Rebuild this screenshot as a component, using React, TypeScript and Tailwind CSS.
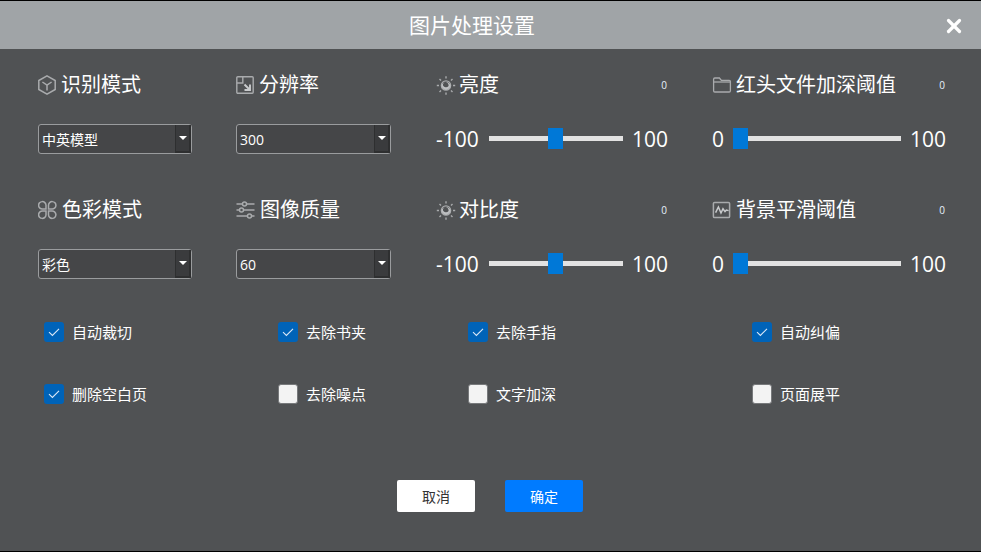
import { ReactNode } from "react";
import { X } from "lucide-react";

const iconProps = {
  viewBox: "0 0 20 20",
  fill: "none",
  stroke: "#a9abad",
  strokeWidth: 1.5,
  className: "w-5 h-5 shrink-0",
};

const CubeIcon = () => (
  <svg {...iconProps}>
    <path d="M9 0.9 17.2 5.5V14.5L9 19.1 0.8 14.5V5.5Z" />
    <path d="M4.4 7 9 10.2 13.6 7M9 10.2V15.4" />
  </svg>
);

const ResizeIcon = () => (
  <svg {...iconProps} strokeWidth={1.4}>
    <rect x="0.8" y="1.8" width="16.4" height="16.4" rx="1" />
    <path d="M0.8 8H6.8V1.8" />
    <path d="M8.5 9.5 13.5 14.5M14 9.5V15H8.5" stroke="#c9cbcd" strokeWidth={1.9} />
  </svg>
);

const CloverIcon = () => (
  <svg {...iconProps}>
    <path d="M8 9H4.7A3.7 3.7 0 1 1 8 5.3ZM10.5 9V5.3A3.7 3.7 0 1 1 13.8 9ZM8 11V14.7A3.7 3.7 0 1 1 4.7 11ZM10.5 11H13.8A3.7 3.7 0 1 1 10.5 14.7Z" />
  </svg>
);

const SlidersIcon = () => (
  <svg {...iconProps}>
    <path d="M0.5 4H6.5M10.5 4H18.5M0.5 10H3.5M7.5 10H18.5M0.5 16H11.5M15.5 16H18.5" />
    <circle cx="8.5" cy="4" r="2" />
    <circle cx="5.5" cy="10" r="2" />
    <circle cx="13.5" cy="16" r="2" />
  </svg>
);

const SunIcon = () => (
  <svg {...iconProps} strokeWidth={1.4}>
    <circle cx="10" cy="10.5" r="4.6" />
    <path d="M5.6 10.5A4.4 4.4 0 0 0 14.4 10.5 4.6 4.6 0 0 0 10 7 4 4 0 0 1 12.6 11 3.4 3.4 0 0 1 7 10.6 3 3 0 0 1 10 7 4.6 4.6 0 0 0 5.6 10.5Z" fill="#bdbfc1" stroke="none" />
    <path d="M10 1.2V3.4M10 17.6V19.8M0.8 10.5H3M17 10.5H19.2M3.5 4 5 5.5M15 15.5 16.5 17M3.5 17 5 15.5M15 5.5 16.5 4" />
  </svg>
);

const FolderIcon = () => (
  <svg {...iconProps} strokeWidth={1.3}>
    <path d="M1.6 4.2A1.2 1.2 0 0 1 2.8 3H7.4L9.4 5.4H17.2A1.2 1.2 0 0 1 18.4 6.6V15.8A1.2 1.2 0 0 1 17.2 17H2.8A1.2 1.2 0 0 1 1.6 15.8Z" />
    <path d="M1.6 7H18.4" />
  </svg>
);

const WaveIcon = () => (
  <svg {...iconProps}>
    <rect x="1.4" y="2.4" width="16.2" height="15.2" rx="1.2" />
    <path d="M3.6 12.6 6.4 7 9 13 11 8.8 13 11.6 14.4 10 16.6 10.6" stroke="#c9cbcd" />
  </svg>
);

const CheckMark = () => (
  <svg viewBox="0 0 20 20" fill="none" stroke="#dbe8f7" strokeWidth={1.1} className="w-5 h-5">
    <path d="M5 10.2 8.4 13.4 15 6.8" />
  </svg>
);

const FieldLabel = ({ icon, text, gap = "gap-[5px]", value }: { icon: ReactNode; text: string; gap?: string; value?: number }) => (
  <div className={`flex items-center h-[30px] ${gap}`}>
    {icon}
    <span className="text-[20px] leading-[30px] text-white">{text}</span>
    {value !== undefined && <span className="ml-auto pr-px text-[10px] text-[#e6f1fb]">{value}</span>}
  </div>
);

const FakeSelect = ({ value, width }: { value: string; width: string }) => (
  <div className={`flex h-[30px] mt-6 rounded-[3px] border border-[#9a9c9e] bg-[#454648] ${width}`}>
    <span className="flex-1 pl-[3px] text-[14px] leading-[29px] text-white">{value}</span>
    <span className="flex items-center justify-center w-[16px] bg-[#3a3b3d] border-l border-[#2e2f30] border-b-2 border-r-2">
      <span className="w-0 h-0 border-x-[4px] border-x-transparent border-t-[4px] border-t-white" />
    </span>
  </div>
);

const Slider = ({ min, max, value, width, minWidth }: { min: number; max: number; value: number; width: string; minWidth: string }) => {
  const ratio = (value - min) / (max - min);
  return (
    <div className={`flex items-center gap-[9px] h-[30px] mt-6 text-[21px] text-white ${width}`}>
      <span className={`leading-[30px] ${minWidth}`}>{min}</span>
      <div className="relative flex-1 h-[5px] self-start mt-3 bg-[#e2e2e2]">
        <div
          className="absolute -top-2 w-[15px] h-[21px] bg-[#0078d7]"
          style={{ left: `calc((100% - 15px) * ${ratio})` }}
        />
      </div>
      <span className="leading-[30px]">{max}</span>
    </div>
  );
};

const Option = ({ label, checked }: { label: string; checked?: boolean }) => (
  <div className="flex items-center gap-2 h-5">
    {checked ? (
      <span className="w-5 h-5 rounded-[3px] bg-[#0063b8]">
        <CheckMark />
      </span>
    ) : (
      <span className="w-5 h-5 rounded-[3px] bg-[#f3f3f3] border border-[#77797b]" />
    )}
    <span className="text-[15px] leading-5 text-white">{label}</span>
  </div>
);

export default function App() {
  return (
    <div
      className="flex flex-col w-[981px] h-[552px] overflow-hidden border-y border-black bg-[#505254]"
      style={{ fontFamily: '"Open Sans", "Noto Sans CJK SC", sans-serif' }}
    >
      <header className="relative flex items-center justify-center h-12 shrink-0 pt-px pr-[37px] bg-[#a0a4a7]">
        <h1 className="text-[21px] text-white font-normal">图片处理设置</h1>
        <X className="absolute right-[16px] top-[14px] w-[22px] h-[22px] text-white" strokeWidth={3.5} />
      </header>

      <section className="grid grid-cols-[198px_200px_276px_234px] gap-y-[41px] pl-[38px] pt-[21px]">
        <div>
          <FieldLabel icon={<CubeIcon />} text="识别模式" gap="gap-[3px]" />
          <FakeSelect value="中英模型" width="w-[154px]" />
        </div>
        <div>
          <FieldLabel icon={<ResizeIcon />} text="分辨率" gap="gap-[3px]" />
          <FakeSelect value="300" width="w-[155px]" />
        </div>
        <div className="pr-[44px]">
          <FieldLabel icon={<SunIcon />} text="亮度" gap="gap-[3px]" value={0} />
          <Slider min={-100} max={100} value={0} width="w-[232px]" minWidth="w-[44px]" />
        </div>
        <div>
          <FieldLabel icon={<FolderIcon />} text="红头文件加深阈值" gap="gap-[4px]" value={0} />
          <Slider min={0} max={100} value={0} width="w-[234px]" minWidth="w-[12px]" />
        </div>

        <div>
          <FieldLabel icon={<CloverIcon />} text="色彩模式" gap="gap-[4px]" />
          <FakeSelect value="彩色" width="w-[154px]" />
        </div>
        <div>
          <FieldLabel icon={<SlidersIcon />} text="图像质量" gap="gap-[4px]" />
          <FakeSelect value="60" width="w-[155px]" />
        </div>
        <div className="pr-[44px]">
          <FieldLabel icon={<SunIcon />} text="对比度" gap="gap-[3px]" value={0} />
          <Slider min={-100} max={100} value={0} width="w-[232px]" minWidth="w-[44px]" />
        </div>
        <div>
          <FieldLabel icon={<WaveIcon />} text="背景平滑阈值" gap="gap-[4px]" value={0} />
          <Slider min={0} max={100} value={0} width="w-[234px]" minWidth="w-[12px]" />
        </div>
      </section>

      <section className="grid grid-cols-[234px_190px_284px_1fr] gap-y-[42px] pl-[44px] mt-[43px]">
        <Option label="自动裁切" checked />
        <Option label="去除书夹" checked />
        <Option label="去除手指" checked />
        <Option label="自动纠偏" checked />
        <Option label="删除空白页" checked />
        <Option label="去除噪点" />
        <Option label="文字加深" />
        <Option label="页面展平" />
      </section>

      <footer className="flex justify-center gap-[30px] mt-[76px] pr-px">
        <button className="w-[78px] h-8 rounded-[2px] bg-white text-[14px] text-[#333]">取消</button>
        <button className="w-[78px] h-8 rounded-[2px] bg-[#007bff] text-[14px] text-white">确定</button>
      </footer>
    </div>
  );
}
